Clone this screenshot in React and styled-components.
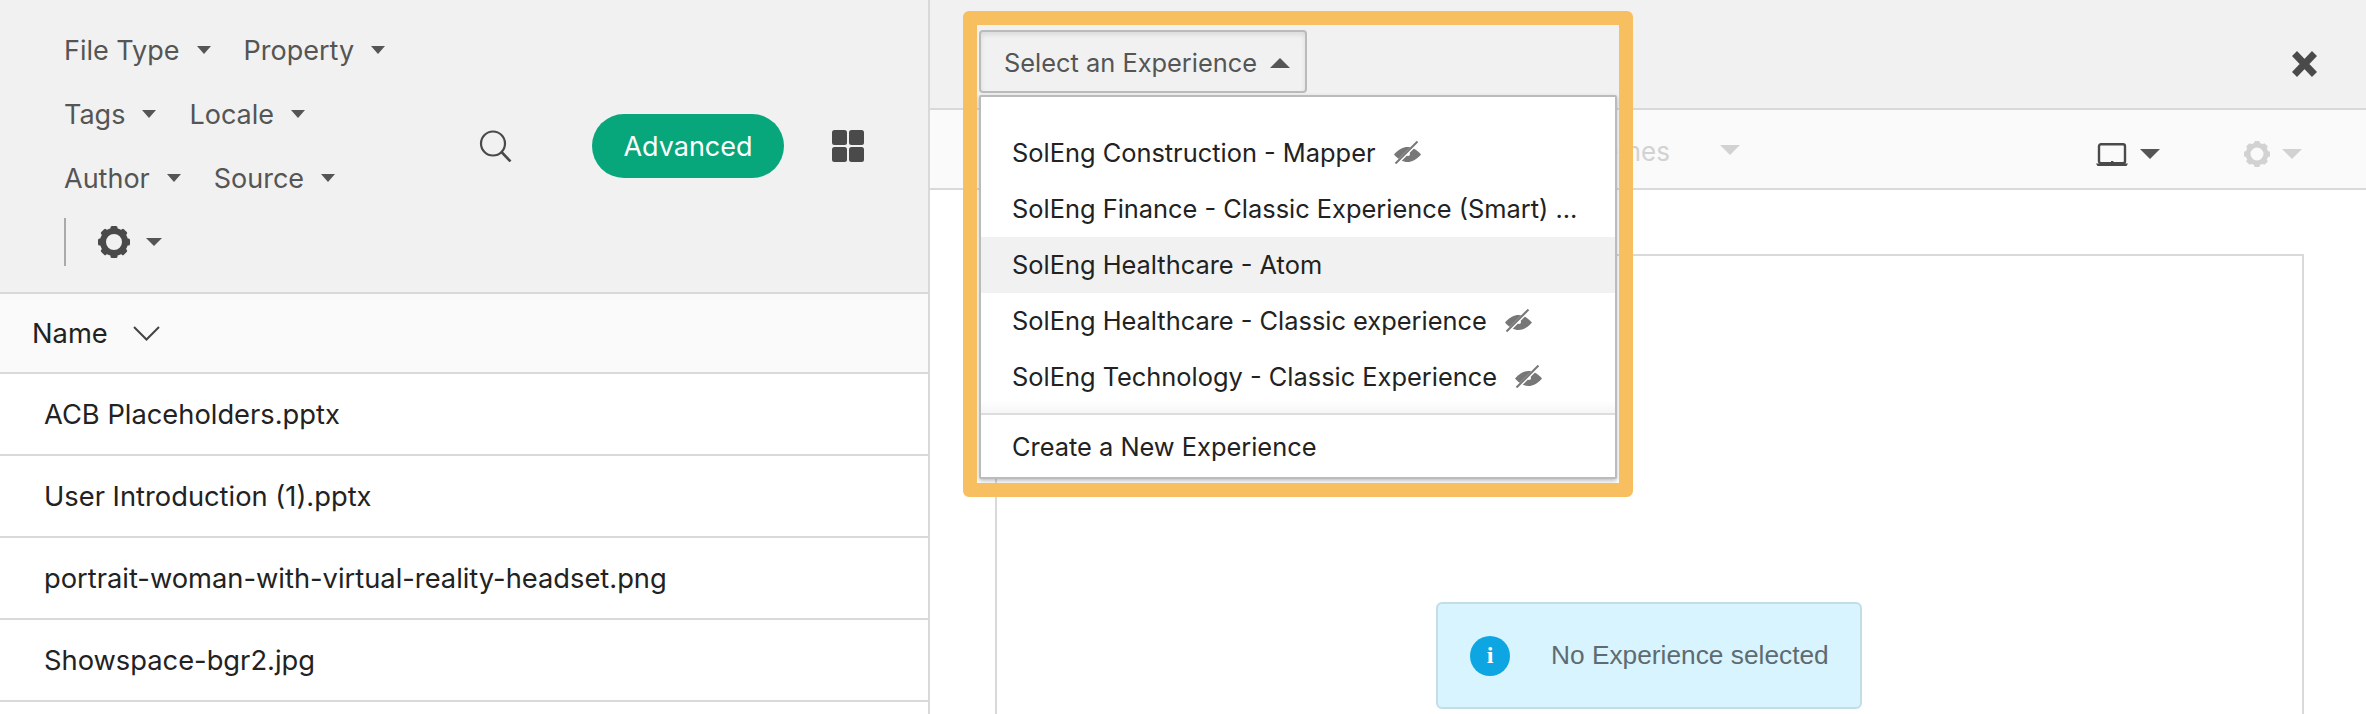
import styled, { createGlobalStyle } from "styled-components";

const GlobalStyle = createGlobalStyle`
    html, body {
        margin: 0;
        padding: 0;
        background: white;
    }
    * {
        box-sizing: border-box;
    }
`
const Page = styled.div`
    display: flex;
    width: 2366px;
    height: 714px;
    overflow: hidden;
    font-family: Inter, "Liberation Sans", sans-serif;
    font-size: 25.4px;
    color: #222;
`
const LeftPanel = styled.div`
    flex: none;
    width: 930px;
    height: 100%;
    border-right: 2px solid #d9d9d9;
    font-size: 27.3px;
`
const Toolbar = styled.div`
    display: flex;
    align-items: center;
    height: 294px;
    padding-left: 64px;
    background-color: #f1f1f1;
    border-bottom: 2px solid #d9d9d9;
    font-size: 27px;
`
const Filters = styled.div`
    flex: none;
    width: 415px;
`
const FilterRow = styled.div`
    display: flex;
    align-items: center;
    gap: 33px;
    height: 64px;
`
const Filter = styled.div`
    display: flex;
    align-items: center;
    gap: 17px;
    color: #555;
`
const SettingsButton = styled.div`
    display: flex;
    align-items: center;
    gap: 16px;
    height: 48px;
    padding-left: 32px;
    border-left: 2px solid #aaa;
`
const Caret = styled.span`
    flex: none;
    width: 0;
    height: 0;
    border-left: ${props => props.size}px solid transparent;
    border-right: ${props => props.size}px solid transparent;
    ${props => props.up ? "border-bottom" : "border-top"}: ${props => props.height}px solid ${props => props.color || "#555"};
    margin-top: ${props => props.shift || 0}px;
`
const SearchButton = styled.div`
    display: flex;
    flex: none;
    width: 113px;
`
const AdvancedButton = styled.div`
    display: flex;
    flex: none;
    align-items: center;
    justify-content: center;
    width: 192px;
    height: 64px;
    border-radius: 32px;
    background-color: #07a67b;
    color: white;
`
const GridButton = styled.div`
    display: flex;
    margin-left: 48px;
`
const HeaderRow = styled.div`
    display: flex;
    align-items: center;
    gap: 25px;
    height: 80px;
    padding-left: 32px;
    background-color: #fafafa;
    border-bottom: 2px solid #d9d9d9;
`
const FileRow = styled.div`
    display: flex;
    align-items: center;
    height: 82px;
    padding-left: 44px;
    border-bottom: 2px solid #d9d9d9;
`
const RightPanel = styled.div`
    position: relative;
    flex: 1;
    height: 100%;
`
const TopBar = styled.div`
    display: flex;
    justify-content: space-between;
    height: 110px;
    padding: 30px 49px 0 49px;
    background-color: #f1f1f1;
    border-bottom: 2px solid #d9d9d9;
`
const CloseButton = styled.div`
    display: flex;
    margin-top: 21px;
    height: 26px;
`
const Dropdown = styled.div`
    position: relative;
`
const SelectButton = styled.div`
    display: flex;
    align-items: center;
    gap: 13px;
    width: 328px;
    height: 63px;
    padding: 2px 0 0 23px;
    background-color: #f1f1f1;
    border: 2px solid #bbb;
    border-radius: 4px;
    box-shadow: inset 0 3px 5px rgba(0, 0, 0, 0.09);
    color: #555;
`
const Menu = styled.div`
    position: absolute;
    top: 65px;
    left: 0;
    z-index: 2;
    width: 638px;
    height: 384px;
    padding-top: 28px;
    background-color: white;
    border: 2px solid #bbb;
    border-radius: 2px;
    box-shadow: 0 2px 4px rgba(0, 0, 0, 0.25);
`
const MenuList = styled.div`
    height: 290px;
    padding-bottom: 8px;
    border-bottom: 2px solid #ddd;
    background: linear-gradient(to bottom, white 276px, #f6f6f6 288px);
`
const MenuItem = styled.div`
    display: flex;
    align-items: center;
    gap: 18px;
    height: 56px;
    padding: 0 0 2px 31px;
    white-space: nowrap;
    background-color: ${props => props.active ? "#f1f1f1" : "transparent"};
`
const CreateItem = styled(MenuItem)`
    height: 64px;
`
const SubBar = styled.div`
    display: flex;
    align-items: center;
    height: 80px;
    padding: 0 64px 0 641px;
    background-color: #fafafa;
    border-bottom: 2px solid #d9d9d9;
    font-size: 26px;
`
const ThemesLabel = styled.div`
    margin: 4px 50px 0 0;
    color: #d2d2d2;
`
const DeviceGroup = styled.div`
    display: flex;
    align-items: center;
    gap: 12px;
    margin-top: 10px;
    margin-left: ${props => props.offset ? props.offset + "px" : "auto"};
`
const Content = styled.div`
    padding: 64px 62px 0 65px;
`
const Canvas = styled.div`
    display: flex;
    justify-content: center;
    height: 600px;
    padding: 346px 1px 0 0;
    border: 2px solid #d9d9d9;
`
const Alert = styled.div`
    display: flex;
    align-items: center;
    gap: 41px;
    width: 426px;
    height: 107px;
    padding-left: 32px;
    background-color: #d8f4ff;
    border: 2px solid #c3dde8;
    border-radius: 6px;
    font-family: "Liberation Sans", Arial, sans-serif;
    font-size: 26.3px;
    color: #5f6b70;
`
const InfoIcon = styled.div`
    display: flex;
    flex: none;
    align-items: center;
    justify-content: center;
    width: 40px;
    height: 40px;
    border-radius: 50%;
    background-color: #0ea5e3;
    color: white;
    font-family: "Liberation Serif", serif;
    font-size: 24px;
    font-weight: bold;
`
const Highlight = styled.div`
    position: absolute;
    top: 11px;
    left: 33px;
    z-index: 3;
    width: 670px;
    height: 486px;
    border: 14px solid #f8bf60;
    border-radius: 6px;
    pointer-events: none;
`

function GearIcon({color, size}) {
    const teeth = [0, 45, 90, 135, 180, 225, 270, 315]
    return(
        <svg width={size} height={size} viewBox="0 0 32 32">
            <circle cx="16" cy="16" r="11" fill="none" stroke={color} strokeWidth="6" />
            {teeth.map(a => <rect key={a} x="12.5" y="0" width="7" height="5" rx="1.5" fill={color} transform={`rotate(${a} 16 16)`} />)}
        </svg>
    )
}

function EyeOffIcon() {
    return(
        <svg width="27" height="23" viewBox="0 0 27 23">
            <path d="M0 13.5 C5 8 9 6 13.5 6 C18 6 22 8 27 13.5 C22 19 18 21 13.5 21 C9 21 5 19 0 13.5 Z" fill="#777" />
            <circle cx="14" cy="13" r="2" fill="white" />
            <path d="M2.5 22.5 L24.5 0.5" stroke="white" strokeWidth="3.5" />
            <path d="M1.5 22.5 L23.5 0.5" stroke="#777" strokeWidth="2" />
        </svg>
    )
}

function App() {
    return(
        <Page>
            <GlobalStyle />
            <LeftPanel>
                <Toolbar>
                    <Filters>
                        <FilterRow>
                            <Filter>File Type <Caret size={7.5} height={8} /></Filter>
                            <Filter>Property <Caret size={7.5} height={8} /></Filter>
                        </FilterRow>
                        <FilterRow>
                            <Filter>Tags <Caret size={7.5} height={8} /></Filter>
                            <Filter>Locale <Caret size={7.5} height={8} /></Filter>
                        </FilterRow>
                        <FilterRow>
                            <Filter>Author <Caret size={7.5} height={8} /></Filter>
                            <Filter>Source <Caret size={7.5} height={8} /></Filter>
                        </FilterRow>
                        <FilterRow>
                            <SettingsButton>
                                <GearIcon color="#4a4a4a" size={32} />
                                <Caret size={8} height={8} />
                            </SettingsButton>
                        </FilterRow>
                    </Filters>
                    <SearchButton>
                        <svg width="33" height="32" viewBox="0 0 33 32">
                            <circle cx="14" cy="13.5" r="12" fill="none" stroke="#4a4a4a" strokeWidth="2.2" />
                            <path d="M22.5 22 L31.5 31.5" stroke="#4a4a4a" strokeWidth="2.6" />
                        </svg>
                    </SearchButton>
                    <AdvancedButton>Advanced</AdvancedButton>
                    <GridButton>
                        <svg width="32" height="32" viewBox="0 0 32 32" fill="#4a4a4a">
                            <rect x="0" y="0" width="15" height="15" rx="2.5" />
                            <rect x="17" y="0" width="15" height="15" rx="2.5" />
                            <rect x="0" y="17" width="15" height="15" rx="2.5" />
                            <rect x="17" y="17" width="15" height="15" rx="2.5" />
                        </svg>
                    </GridButton>
                </Toolbar>
                <HeaderRow>
                    Name
                    <svg width="27" height="15" viewBox="0 0 27 15">
                        <path d="M1 1 L13.5 13.5 L26 1" fill="none" stroke="#444" strokeWidth="2" />
                    </svg>
                </HeaderRow>
                <FileRow>ACB Placeholders.pptx</FileRow>
                <FileRow>User Introduction (1).pptx</FileRow>
                <FileRow>portrait-woman-with-virtual-reality-headset.png</FileRow>
                <FileRow>Showspace-bgr2.jpg</FileRow>
            </LeftPanel>
            <RightPanel>
                <TopBar>
                    <Dropdown>
                        <SelectButton>
                            Select an Experience
                            <Caret up size={10} height={10} />
                        </SelectButton>
                        <Menu>
                            <MenuList>
                                <MenuItem>SolEng Construction - Mapper <EyeOffIcon /></MenuItem>
                                <MenuItem>SolEng Finance - Classic Experience (Smart) ...</MenuItem>
                                <MenuItem active>SolEng Healthcare - Atom</MenuItem>
                                <MenuItem>SolEng Healthcare - Classic experience <EyeOffIcon /></MenuItem>
                                <MenuItem>SolEng Technology - Classic Experience <EyeOffIcon /></MenuItem>
                            </MenuList>
                            <CreateItem>Create a New Experience</CreateItem>
                        </Menu>
                    </Dropdown>
                    <CloseButton>
                        <svg width="25" height="26" viewBox="0 0 25 26">
                            <path d="M2.5 2.5 L22.5 23.5 M22.5 2.5 L2.5 23.5" stroke="#4a4a4a" strokeWidth="7" />
                        </svg>
                    </CloseButton>
                </TopBar>
                <SubBar>
                    <ThemesLabel>Themes</ThemesLabel>
                    <Caret size={10} height={10} color="#d2d2d2" shift={2} />
                    <DeviceGroup>
                        <svg width="32" height="23" viewBox="0 0 32 23">
                            <rect x="3" y="1.2" width="26" height="19" rx="2" fill="none" stroke="#4a4a4a" strokeWidth="2.4" />
                            <path d="M0 20.5 H32 L30.5 23 H1.5 Z" fill="#4a4a4a" />
                            <rect x="15" y="18" width="2.4" height="2.4" fill="#4a4a4a" />
                        </svg>
                        <Caret size={10} height={10} />
                    </DeviceGroup>
                    <DeviceGroup offset={84}>
                        <GearIcon color="#d2d2d2" size={26} />
                        <Caret size={10} height={10} color="#d2d2d2" />
                    </DeviceGroup>
                </SubBar>
                <Content>
                    <Canvas>
                        <Alert>
                            <InfoIcon>i</InfoIcon>
                            No Experience selected
                        </Alert>
                    </Canvas>
                </Content>
                <Highlight />
            </RightPanel>
        </Page>
    )
}

export default App;
